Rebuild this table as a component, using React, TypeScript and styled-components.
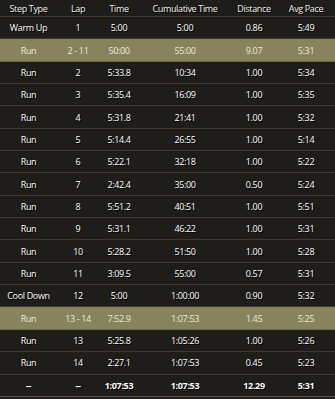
import React from "react";
import styled, { createGlobalStyle } from "styled-components";

const Global = createGlobalStyle`
  html, body {
    margin: 0;
    padding: 0;
    background: #1f1d1a;
  }
`;

const Wrap = styled.div`
  width: 335px;
  height: 399px;
  overflow: hidden;
  background: #1f1d1a;
  font-family: "Open Sans", "DejaVu Sans", sans-serif;
  font-size: 9px;
  letter-spacing: -0.35px;
`;

const cols = "57px 42px 40px 92px 46px 58px";

const HeadRow = styled.div`
  display: grid;
  grid-template-columns: ${cols};
  height: 17px;
  align-items: center;
  border-bottom: 1px solid #3d3a35;
  box-sizing: border-box;
`;

const Row = styled.div<{ $hl?: boolean; $bold?: boolean }>`
  display: grid;
  grid-template-columns: ${cols};
  height: 22.35px;
  align-items: center;
  box-sizing: border-box;
  border-bottom: 1px solid ${(p) => (p.$hl ? "#6f6b4d" : "#3d3a35")};
  background: ${(p) => (p.$hl ? "#87835d" : "transparent")};
  color: ${(p) => (p.$hl ? "#ecead8" : "#ffffff")};
  font-weight: ${(p) => (p.$bold ? 700 : 400)};
  text-shadow: ${(p) => (p.$hl ? "none" : "1px 1px 0 #000")};

  &:last-child {
    border-bottom-color: #5a5750;
  }
`;

const Cell = styled.div`
  text-align: center;
  white-space: nowrap;
`;

const HeadCell = styled(Cell)`
  color: #f4f2ea;
  text-shadow: 1px 1px 0 #000;
`;

type Lap = {
  step: string;
  lap: string;
  time: string;
  cum: string;
  dist: string;
  pace: string;
  hl?: boolean;
  bold?: boolean;
};

const laps: Lap[] = [
  { step: "Warm Up", lap: "1", time: "5:00", cum: "5:00", dist: "0.86", pace: "5:49" },
  { step: "Run", lap: "2 - 11", time: "50:00", cum: "55:00", dist: "9.07", pace: "5:31", hl: true },
  { step: "Run", lap: "2", time: "5:33.8", cum: "10:34", dist: "1.00", pace: "5:34" },
  { step: "Run", lap: "3", time: "5:35.4", cum: "16:09", dist: "1.00", pace: "5:35" },
  { step: "Run", lap: "4", time: "5:31.8", cum: "21:41", dist: "1.00", pace: "5:32" },
  { step: "Run", lap: "5", time: "5:14.4", cum: "26:55", dist: "1.00", pace: "5:14" },
  { step: "Run", lap: "6", time: "5:22.1", cum: "32:18", dist: "1.00", pace: "5:22" },
  { step: "Run", lap: "7", time: "2:42.4", cum: "35:00", dist: "0.50", pace: "5:24" },
  { step: "Run", lap: "8", time: "5:51.2", cum: "40:51", dist: "1.00", pace: "5:51" },
  { step: "Run", lap: "9", time: "5:31.1", cum: "46:22", dist: "1.00", pace: "5:31" },
  { step: "Run", lap: "10", time: "5:28.2", cum: "51:50", dist: "1.00", pace: "5:28" },
  { step: "Run", lap: "11", time: "3:09.5", cum: "55:00", dist: "0.57", pace: "5:31" },
  { step: "Cool Down", lap: "12", time: "5:00", cum: "1:00:00", dist: "0.90", pace: "5:32" },
  { step: "Run", lap: "13 - 14", time: "7:52.9", cum: "1:07:53", dist: "1.45", pace: "5:25", hl: true },
  { step: "Run", lap: "13", time: "5:25.8", cum: "1:05:26", dist: "1.00", pace: "5:26" },
  { step: "Run", lap: "14", time: "2:27.1", cum: "1:07:53", dist: "0.45", pace: "5:23" },
  { step: "--", lap: "--", time: "1:07:53", cum: "1:07:53", dist: "12.29", pace: "5:31", bold: true },
];

const headers = ["Step Type", "Lap", "Time", "Cumulative Time", "Distance", "Avg Pace"];

export default function App() {
  return (
    <Wrap>
      <Global />
      <HeadRow>
        {headers.map((h) => (
          <HeadCell key={h}>{h}</HeadCell>
        ))}
      </HeadRow>
      {laps.map((l, i) => (
        <Row key={i} $hl={l.hl} $bold={l.bold}>
          <Cell>{l.step}</Cell>
          <Cell>{l.lap}</Cell>
          <Cell>{l.time}</Cell>
          <Cell>{l.cum}</Cell>
          <Cell>{l.dist}</Cell>
          <Cell>{l.pace}</Cell>
        </Row>
      ))}
    </Wrap>
  );
}
